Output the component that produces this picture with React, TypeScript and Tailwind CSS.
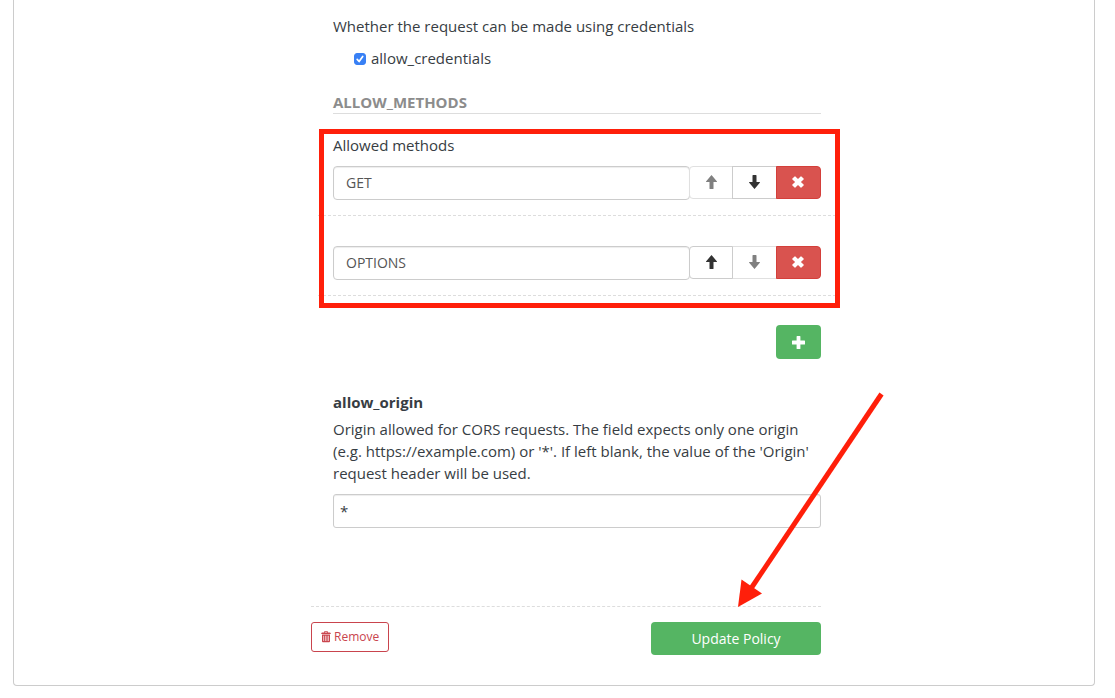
import { useState } from "react";

function ArrowUpIcon() {
  return (
    <svg viewBox="0 0 11 14" className="h-[14px] w-[11px]" fill="currentColor" aria-hidden="true">
      <path d="M5.5 0 L11 6.6 Q11.1 7.1 10.5 7.1 H7.5 V13.4 Q7.5 14 6.9 14 H4.1 Q3.5 14 3.5 13.4 V7.1 H0.5 Q-0.1 7.1 0 6.6 Z" />
    </svg>
  );
}

function ArrowDownIcon() {
  return (
    <svg viewBox="0 0 11 14" className="h-[14px] w-[11px]" fill="currentColor" aria-hidden="true">
      <path d="M5.5 14 L11 7.4 Q11.1 6.9 10.5 6.9 H7.5 V0.6 Q7.5 0 6.9 0 H4.1 Q3.5 0 3.5 0.6 V6.9 H0.5 Q-0.1 6.9 0 7.4 Z" />
    </svg>
  );
}

function RemoveIcon() {
  return (
    <svg viewBox="0 0 12 12" className="size-3" fill="currentColor" aria-hidden="true">
      <path d="M2.6 0.4 Q3 0 3.4 0.4 L6 3.1 L8.6 0.4 Q9 0 9.4 0.4 L11.6 2.6 Q12 3 11.6 3.4 L8.9 6 L11.6 8.6 Q12 9 11.6 9.4 L9.4 11.6 Q9 12 8.6 11.6 L6 8.9 L3.4 11.6 Q3 12 2.6 11.6 L0.4 9.4 Q0 9 0.4 8.6 L3.1 6 L0.4 3.4 Q0 3 0.4 2.6 Z" />
    </svg>
  );
}

function PlusIcon() {
  return (
    <svg viewBox="0 0 13 13" className="size-[13px]" fill="currentColor" aria-hidden="true">
      <path d="M5.1 0 H7.9 Q8.4 0 8.4 0.5 V4.6 H12.5 Q13 4.6 13 5.1 V7.9 Q13 8.4 12.5 8.4 H8.4 V12.5 Q8.4 13 7.9 13 H5.1 Q4.6 13 4.6 12.5 V8.4 H0.5 Q0 8.4 0 7.9 V5.1 Q0 4.6 0.5 4.6 H4.6 V0.5 Q4.6 0 5.1 0 Z" />
    </svg>
  );
}

function TrashIcon() {
  return (
    <svg viewBox="0 0 10 12" className="h-3 w-[10px]" fill="currentColor" aria-hidden="true">
      <path d="M3 1.6 V1 Q3 0.3 3.7 0.3 H6.3 Q7 0.3 7 1 V1.6 H9 Q9.8 1.7 9.8 3 H0.2 Q0.2 1.7 1 1.6 Z M3.8 1.6 H6.2 V1 H3.8 Z" fillRule="evenodd" />
      <path
        d="M1 3.6 H9 V10.3 Q9 11.2 8.1 11.2 H1.9 Q1 11.2 1 10.3 Z M2.4 4.7 V10 H3.1 V4.7 Z M4.2 4.7 V10 H4.8 V4.7 Z M5.7 4.7 V10 H6.3 V4.7 Z M7.2 4.7 V10 H7.8 V4.7 Z"
        fillRule="evenodd"
      />
    </svg>
  );
}

type MethodRowProps = {
  value: string;
  first: boolean;
  last: boolean;
  onChange: (value: string) => void;
};

function MethodRow({ value, first, last, onChange }: MethodRowProps) {
  const move =
    "relative flex items-center justify-center border border-[#ccc] bg-white pb-px text-[#333] disabled:border-[#e0e0e0] disabled:text-[#808080] enabled:z-10";
  return (
    <li className="-mx-[15px] border-b border-dashed border-[#ddd] px-[15px] pb-[15px]">
      <div className="flex items-start">
        <input
          type="text"
          aria-label="Allowed method"
          value={value}
          onChange={(e) => onChange(e.target.value)}
          className="h-[34px] min-w-0 flex-1 rounded border border-[#ccc] bg-white px-3 pb-[2px] text-sm text-[#555] shadow-[inset_0_1px_1px_rgba(0,0,0,0.075)]"
        />
        <div className="-ml-px flex h-[33px]">
          <button type="button" aria-label="Move up" disabled={first} className={`${move} w-11 rounded-l`}>
            <ArrowUpIcon />
          </button>
          <button type="button" aria-label="Move down" disabled={last} className={`${move} -ml-px w-[45px]`}>
            <ArrowDownIcon />
          </button>
          <button
            type="button"
            aria-label="Delete method"
            className="relative z-20 -ml-px flex w-[45px] items-center justify-center rounded-r border border-[#d43f3a] bg-[#d9534f] pr-px pb-px text-white"
          >
            <RemoveIcon />
          </button>
        </div>
      </div>
    </li>
  );
}

export default function App() {
  const [credentials, setCredentials] = useState(true);
  const [methods, setMethods] = useState(["GET", "OPTIONS"]);
  const [origin, setOrigin] = useState("*");

  return (
    <main className="bg-white pr-5 pb-3 pl-[13px] font-['Open_Sans','Noto_Sans',sans-serif] text-[15px] leading-[22px] text-[#373d43]">
      <div className="rounded-b border border-t-0 border-[#ccc] pt-[15px] pb-[30px] pl-6">
        <form className="mx-auto max-w-[510px]" onSubmit={(e) => e.preventDefault()}>
          <div className="pl-[22px]">
            <p>Whether the request can be made using credentials</p>
            <label className="mt-[10px] ml-[21px] flex items-center gap-[5px]">
              <input
                type="checkbox"
                checked={credentials}
                onChange={(e) => setCredentials(e.target.checked)}
                className="peer sr-only"
              />
              <span className="mt-px flex size-3 items-center justify-center rounded-[3px] border border-[#888] bg-white text-transparent peer-checked:border-[#3880f5] peer-checked:bg-[#3880f5] peer-checked:text-white">
                <svg viewBox="0 0 12 12" className="size-3 shrink-0" fill="none" stroke="currentColor" strokeWidth="1.7" strokeLinecap="round" strokeLinejoin="round" aria-hidden="true">
                  <path d="M3.2 6.4 L5.1 8.5 L8.7 3.4" />
                </svg>
              </span>
              allow_credentials
            </label>

            <h2 className="mt-[22px] border-b border-[#ddd] leading-[22px] font-bold text-[#8c8c8c]">
              ALLOW_METHODS
            </h2>

            <section className="relative pt-5">
              <p>Allowed methods</p>
              <ul className="mt-[10px] flex flex-col gap-[30px]">
                {methods.map((method, i) => (
                  <MethodRow
                    key={i}
                    value={method}
                    first={i === 0}
                    last={i === methods.length - 1}
                    onChange={(value) => setMethods(methods.map((m, j) => (j === i ? value : m)))}
                  />
                ))}
              </ul>
              <div className="pointer-events-none absolute top-[15px] -right-[19px] -bottom-3 -left-[14px] z-30 border-5 border-[#ff1f0a]" />
            </section>

            <div className="mt-[29px] flex justify-end">
              <button
                type="button"
                aria-label="Add method"
                className="flex h-[34px] w-[45px] items-center justify-center rounded bg-[#55b563] pr-px text-white"
              >
                <PlusIcon />
              </button>
            </div>

            <section className="relative mt-8">
              <label htmlFor="allow-origin" className="block font-bold">
                allow_origin
              </label>
              <p className="mt-[5px]">
                Origin allowed for CORS requests. The field expects only one origin (e.g. https://example.com) or '*'. If
                left blank, the value of the 'Origin' request header will be used.
              </p>
              <input
                id="allow-origin"
                type="text"
                value={origin}
                onChange={(e) => setOrigin(e.target.value)}
                className="mt-[10px] block h-[34px] w-full rounded-[3px] border border-[#ccc] bg-white px-[6px] shadow-[inset_0_1px_1px_rgba(0,0,0,0.075)]"
              />
              <svg
                viewBox="0 0 150 216"
                className="pointer-events-none absolute top-px -right-[65px] z-30 h-[216px] w-[150px]"
                aria-hidden="true"
              >
                <path d="M145.5 2 L14 198" stroke="#ff1f0a" strokeWidth="5" />
                <path d="M2 215 L5.5 187.5 L26 201.5 Z" fill="#ff1f0a" />
              </svg>
            </section>
          </div>

          <footer className="mt-[78px] flex items-start justify-between border-t border-dashed border-[#ddd] pt-[15px]">
            <button
              type="button"
              className="flex h-[30px] items-center gap-[3px] rounded-[3px] border border-[#c9444d] bg-white px-[9px] text-xs text-[#c9444d]"
            >
              <TrashIcon />
              Remove
            </button>
            <button type="submit" className="h-[33px] w-[170px] rounded bg-[#55b563] text-sm text-white">
              Update Policy
            </button>
          </footer>
        </form>
      </div>
    </main>
  );
}
